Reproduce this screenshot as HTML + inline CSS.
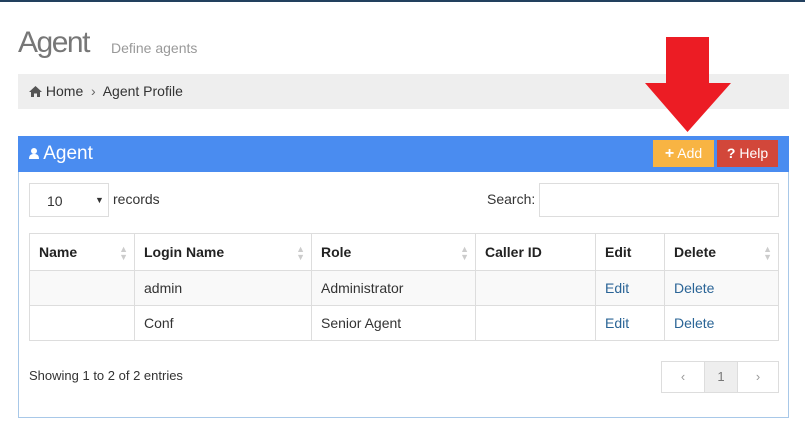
<!DOCTYPE html>
<html><head><meta charset="utf-8"><style>
*{box-sizing:border-box;margin:0;padding:0}
body{width:805px;height:426px;background:#fff;font-family:"Liberation Sans",sans-serif;color:#333;position:relative;overflow:hidden;font-size:14px}
.abs{position:absolute}
.topbar{left:0;top:0;width:805px;height:2px;background:#22405e}
h1{position:absolute;left:18px;top:26px;font-size:30px;font-weight:normal;color:#777;letter-spacing:-1.5px}
.sub{left:111px;top:40px;font-size:14px;color:#999}
.bc{left:18px;top:74px;width:771px;height:35px;background:#eee;font-size:14px;line-height:35px;padding-left:11px;color:#333}
.panel{left:18px;top:136px;width:771px;height:282px;border:1px solid #a8c8e8;border-top:none}
.ph{left:18px;top:136px;width:771px;height:36px;background:#4a8cf0;color:#fff;font-size:19px;line-height:36px;padding-left:11px}
.btn{top:140px;height:27px;color:#fff;font-size:14px;line-height:27px;text-align:center}
table{position:absolute;left:29px;top:233px;border-collapse:collapse;font-size:14px}
td,th{border:1px solid #ddd;text-align:left;padding-left:9px;height:35px}
th{height:37px;font-weight:bold;color:#222;position:relative}
tr.odd td{background:#f9f9f9}
.s{position:absolute;right:6px;top:11px;color:#ccc;font-size:9px;line-height:8px}
a{color:#2a6496;text-decoration:none}
</style></head><body>
<div class="abs topbar"></div>
<h1>Agent</h1>
<div class="abs sub">Define agents</div>
<div class="abs bc"><svg width="13" height="11" style="vertical-align:-1px"><path d="M6.5 0L0 6H2V11H5V7.5H8V11H11V6H13Z" fill="#555"/></svg> Home &nbsp;<span style="color:#666">›</span>&nbsp; Agent Profile</div>
<div class="abs panel"></div>
<div class="abs ph"><svg width="10" height="11" style="vertical-align:0"><circle cx="5" cy="3" r="3" fill="#fff"/><path d="M0 11C0 7 2 6 5 6S10 7 10 11Z" fill="#fff"/></svg> Agent</div>
<div class="abs btn" style="left:653px;width:61px;background:#f8b443"><b style="font-size:16px">+</b> Add</div>
<div class="abs btn" style="left:717px;width:61px;background:#d2473a"><b>?</b> Help</div>
<svg class="abs" style="left:644px;top:36px" width="88" height="98"><path d="M22 1H65V47H87L43.5 96L1 47H22Z" fill="#ec1c24"/></svg>
<div class="abs" style="left:29px;top:183px;width:80px;height:34px;border:1px solid #ddd;padding:9px 0 0 17px;font-size:14px">10<span style="position:absolute;left:65px;top:11px;font-size:9px">▼</span></div>
<div class="abs" style="left:113px;top:191px">records</div>
<div class="abs" style="left:487px;top:191px">Search:</div>
<div class="abs" style="left:539px;top:183px;width:240px;height:34px;border:1px solid #ddd"></div>
<table>
<tr><th style="width:105px">Name<span class="s">▲<br>▼</span></th><th style="width:177px">Login Name<span class="s">▲<br>▼</span></th><th style="width:164px">Role<span class="s">▲<br>▼</span></th><th style="width:120px">Caller ID</th><th style="width:69px">Edit</th><th style="width:114px">Delete<span class="s">▲<br>▼</span></th></tr>
<tr class="odd"><td></td><td>admin</td><td>Administrator</td><td></td><td><a>Edit</a></td><td><a>Delete</a></td></tr>
<tr><td></td><td>Conf</td><td>Senior Agent</td><td></td><td><a>Edit</a></td><td><a>Delete</a></td></tr>
</table>
<div class="abs" style="left:29px;top:368px;font-size:13px">Showing 1 to 2 of 2 entries</div>
<div class="abs" style="left:661px;top:361px;width:118px;height:32px;border:1px solid #ddd;display:flex;font-size:13px;line-height:30px;text-align:center;color:#999">
<div style="width:42px">‹</div><div style="width:34px;background:#eee;color:#777;border-left:1px solid #ddd;border-right:1px solid #ddd">1</div><div style="flex:1">›</div></div>
</body></html>
